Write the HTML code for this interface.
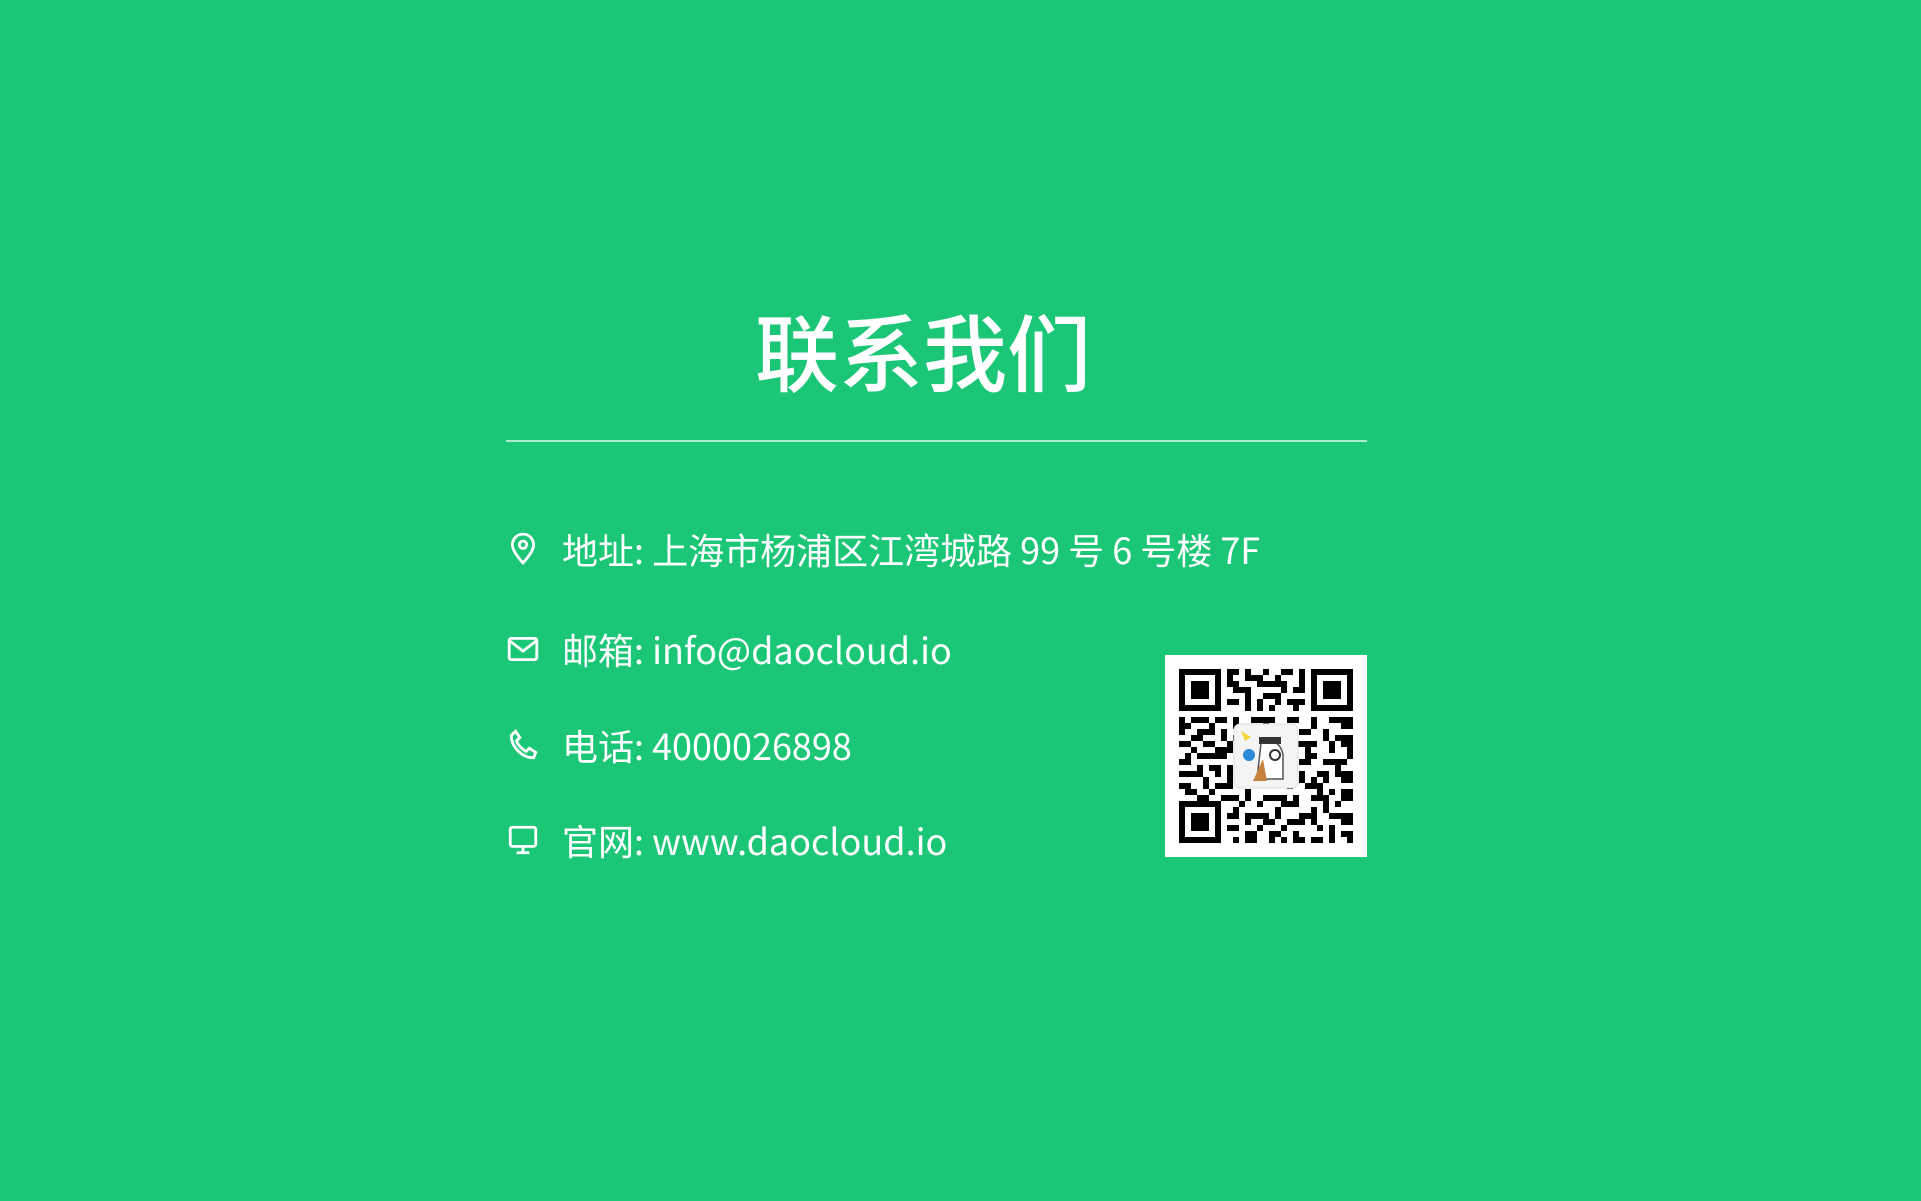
<!DOCTYPE html>
<html><head><meta charset="utf-8"><style>
html,body{margin:0;padding:0}
body{width:1921px;height:1201px;background:#1bc676;position:relative;overflow:hidden;font-family:"Liberation Sans","Noto Sans CJK SC",sans-serif;color:#fff}
h1{position:absolute;left:0;width:1846px;top:295px;margin:0;text-align:center;font-family:"Noto Sans CJK SC",sans-serif;font-weight:500;font-size:84px;line-height:110px}
.line{position:absolute;left:506px;top:440px;width:861px;height:1.5px;background:rgba(255,255,255,.65)}
.row{position:absolute;left:506px;height:50px;display:flex;align-items:center;font-family:"Noto Sans CJK SC",sans-serif;font-weight:400;font-size:36px;white-space:nowrap}
.row svg{width:34px;height:34px;margin-right:22px;flex:none}
.qr{position:absolute;left:1165px;top:655px;width:202px;height:202px;background:#fff}
</style></head><body>
<h1>联系我们</h1>
<div class="line"></div>
<div class="row" style="top:524px"><svg viewBox="0 0 32 32" fill="none" stroke="#fff" stroke-width="2.7"><path d="M16 29C16 29 6 19 6 12a10 10 0 0 1 20 0c0 7-10 17-10 17z"/><circle cx="16" cy="12" r="3.5"/></svg>地址: 上海市杨浦区江湾城路 99 号 6 号楼 7F</div>
<div class="row" style="top:624px"><svg viewBox="0 0 32 32" fill="none" stroke="#fff" stroke-width="2.7"><rect x="3" y="6" width="26" height="20" rx="2"/><path d="M3 8l13 10 13-10"/></svg>邮箱: info@daocloud.io</div>
<div class="row" style="top:720px"><svg viewBox="0 0 32 32" fill="none" stroke="#fff" stroke-width="2.7"><path d="M9 3l4 6-3 3c1 4 5 8 9 10l3-3 6 4-2 5c-11 0-21-10-21-21z"/></svg>电话: 4000026898</div>
<div class="row" style="top:815px"><svg viewBox="0 0 32 32" fill="none" stroke="#fff" stroke-width="2.7"><rect x="4" y="4" width="24" height="18" rx="2"/><path d="M16 22v6M10 28h12"/></svg>官网: www.daocloud.io</div>
<div class="qr"><svg width="202" height="202" viewBox="0 0 202 202">
<g fill="#000" transform="translate(14,14)">
<path d="M0 0h42v42h-42zM6 6v30h30v-30zM12 12h18v18h-18z" fill-rule="evenodd"/>
<path d="M132 0h42v42h-42zM138 6v30h30v-30zM144 12h18v18h-18z" fill-rule="evenodd"/>
<path d="M0 132h42v42h-42zM6 138v30h30v-30zM12 144h18v18h-18z" fill-rule="evenodd"/>
<path d="M48 0h12v6h-12zM66 0h6v12h-6zM84 0h6v6h-6zM102 0h12v6h-12zM120 0h6v18h-6zM54 12h6v12h-6zM78 12h18v6h-18zM102 12h6v12h-6zM48 30h12v6h-12zM66 24h6v18h-6zM84 24h12v6h-12zM108 30h18v6h-18zM90 36h6v6h-6zM48 6h6v12h-6zM72 6h12v6h-12zM96 6h6v12h-6zM114 18h12v6h-12zM60 18h12v6h-12zM78 30h6v12h-6zM96 24h6v12h-6zM114 36h6v6h-6z"/>
<path d="M0 48h6v18h-6zM12 48h18v6h-18zM36 48h12v6h-12zM54 48h6v12h-6zM72 48h24v6h-24zM108 48h12v6h-12zM132 48h6v12h-6zM150 48h24v6h-24zM18 60h12v6h-12zM42 60h6v12h-6zM120 60h12v6h-12zM144 60h6v12h-6zM162 54h12v6h-12zM6 54h6v6h-6zM30 54h6v12h-6zM12 66h12v6h-12zM0 72h6v6h-6zM84 54h6v12h-6zM96 60h12v6h-12zM156 66h18v6h-18z"/>
<path d="M0 72h12v6h-12zM24 72h12v6h-12zM6 84h6v12h-6zM18 84h18v6h-18zM0 102h18v6h-18zM30 96h12v6h-12zM24 108h6v12h-6zM0 114h12v6h-12zM36 114h18v6h-18zM12 78h6v6h-6zM36 78h12v12h-12zM0 90h6v6h-6zM18 96h6v12h-6zM36 102h6v6h-6zM6 120h12v6h-12zM30 120h6v6h-6zM42 126h6v6h-6zM18 126h12v6h-12z"/>
<path d="M120 72h18v6h-18zM150 72h6v12h-6zM162 72h12v6h-12zM126 84h12v6h-12zM144 90h24v6h-24zM120 102h6v12h-6zM138 102h12v6h-12zM162 102h12v12h-12zM126 114h18v6h-18zM150 120h6v6h-6zM126 78h6v6h-6zM168 78h6v12h-6zM120 90h12v6h-12zM156 96h6v12h-6zM132 108h6v6h-6zM144 108h6v6h-6zM162 120h12v6h-12zM138 120h6v6h-6z"/>
<path d="M48 126h12v6h-12zM66 120h6v12h-6zM84 126h24v6h-24zM114 126h6v12h-6zM132 126h18v6h-18zM162 126h12v6h-12zM54 138h6v12h-6zM72 144h18v6h-18zM96 138h6v12h-6zM108 150h18v6h-18zM132 138h6v18h-6zM150 144h24v6h-24zM48 156h12v6h-12zM66 162h12v12h-12zM90 162h12v6h-12zM114 162h6v12h-6zM132 168h12v6h-12zM150 156h6v18h-6zM162 162h12v6h-12zM84 174h6v-6h6v6zM60 132h6v6h-6zM78 132h6v6h-6zM102 132h12v6h-12zM144 132h6v12h-6zM156 132h6v6h-6zM48 144h6v6h-6zM66 144h6v12h-6zM84 150h12v6h-12zM102 156h6v6h-6zM120 144h12v6h-12zM162 150h12v6h-12zM54 168h6v6h-6zM78 156h6v6h-6zM102 168h6v6h-6zM120 168h6v6h-6zM168 168h6v6h-6zM138 156h6v6h-6z"/>
<path d="M48 72h6v12h-6zM60 66h6v6h-6zM102 66h12v6h-12zM48 96h6v18h-6zM108 90h6v12h-6zM48 114h6v6h-6zM60 108h6v6h-6zM108 108h6v12h-6zM54 66h6v6h-6zM114 72h6v6h-6z"/>
</g>
<rect x="69" y="69" width="64" height="64" rx="6" fill="#f4f4f4" stroke="#ddd"/>
<path d="M76 76l10 6-6 4z" fill="#f5d63a"/>
<path d="M96 88c10-6 20 0 22 12v24h-26z" fill="#fff" stroke="#555" stroke-width="1.5"/>
<rect x="94" y="82" width="22" height="7" fill="#333"/>
<circle cx="110" cy="100" r="5" fill="#fff" stroke="#333" stroke-width="2"/>
<path d="M98 104l-10 22h14z" fill="#c5833f"/>
<circle cx="84" cy="100" r="6" fill="#2a8ad8"/>
</svg></div>
</body></html>
